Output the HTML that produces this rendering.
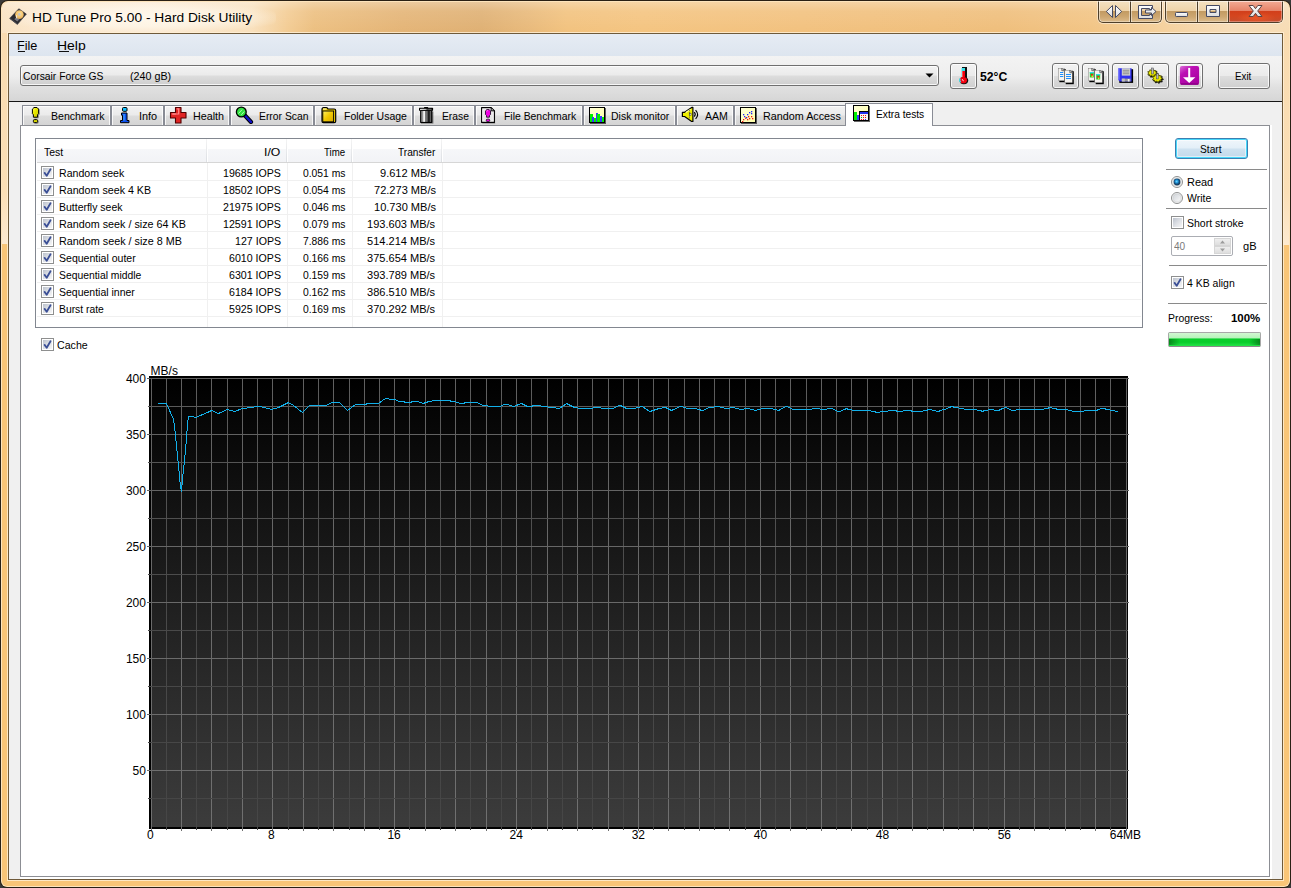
<!DOCTYPE html>
<html>
<head>
<meta charset="utf-8">
<title>HD Tune Pro 5.00 - Hard Disk Utility</title>
<style>
*{box-sizing:border-box;margin:0;padding:0}
html,body{width:1291px;height:888px;overflow:hidden}
body{position:relative;background:#3a3a3a;font-family:"Liberation Sans",sans-serif;font-size:11px;color:#000}
.a{position:absolute}
.t{position:absolute;white-space:pre;line-height:1;transform-origin:0 0}
#frame{left:0;top:0;width:1291px;height:888px;border-radius:8px 8px 7px 7px;background:#2a2014}
#frame2{left:1px;top:1px;width:1289px;height:886px;border-radius:7px 7px 6px 6px;background:#fde4bc}
#frame3{left:2px;top:2px;width:1287px;height:884px;border-radius:6px 6px 5px 5px;background:#f9c577}
#ftitle{left:2px;top:2px;width:1287px;height:31px;border-radius:6px 6px 0 0;
 background:linear-gradient(90deg,#f9e2c2 0px,#fbe6ca 30px,#fbe8cf 150px,#f9e0bc 250px,#f3cc94 285px,#ecbf80 312px,#e4b476 400px,#dfb073 480px,#e8b97a 525px,#f2c27e 565px,#f4c480 640px,#f2c17e 800px,#efbe7b 1000px,#f2c484 1090px,#f5d09c 1160px,#f6dcb8 1230px,#f7dcb4 1289px)}
#fleft{left:2px;top:33px;width:6px;height:211px;background:linear-gradient(180deg,#f9dbb0 0,#fbdfb6 75%,#fdead0 100%)}
#fright{left:1283px;top:33px;width:6px;height:212px;background:linear-gradient(180deg,#f9dbb0 0,#fbdfb6 75%,#fdead0 100%)}
#client{left:8px;top:33px;width:1275px;height:847px;background:#f0f0f0;border:1px solid #6f5a3a;box-shadow:0 0 0 1px rgba(255,240,215,.8)}
#menubar{left:9px;top:34px;width:1273px;height:22px;background:linear-gradient(180deg,#e6ecf4,#dde5ef)}
#toolbar{left:9px;top:56px;width:1273px;height:45px;background:linear-gradient(180deg,#f3f3f3 0,#eeeeee 45%,#e0e0e0 70%,#d6d6d6 100%)}
#tbline{left:9px;top:101px;width:1273px;height:1px;background:#161616}
#page{left:20px;top:125px;width:1250px;height:752px;background:#fff;border:1px solid #8c8e94;box-shadow:1px 1px 0 1px #fff}
.btn{border:1px solid #707070;border-radius:3px;background:linear-gradient(180deg,#f2f2f2 0,#ebebeb 48%,#dddddd 52%,#cfcfcf 100%);box-shadow:inset 0 0 0 1px rgba(255,255,255,.8)}
.tab{border:1px solid #898c95;border-bottom:none;background:linear-gradient(180deg,#f2f2f2 0,#ebebeb 48%,#dddddd 52%,#d4d4d4 100%);box-shadow:inset 1px 1px 0 rgba(255,255,255,.8),inset -1px 0 0 rgba(255,255,255,.8)}
.tabsel{border:1px solid #898c95;border-bottom:none;background:#fff}
.sep{height:1px;background:#8a8a8a}
.cb{width:13px;height:13px;border:1px solid #8e8f8f;background:linear-gradient(135deg,#dfe2e6 0,#f4f5f6 60%,#fbfbfb 100%);box-shadow:inset 0 0 0 1px #f4f4f4,inset 0 0 0 2px #c4c8cc}
</style>
</head>
<body>
<div id="frame" class="a"></div><div id="frame2" class="a"></div><div id="frame3" class="a"></div><div id="ftitle" class="a"></div><div id="fleft" class="a"></div><div id="fright" class="a"></div>
<div class="a" style="left:2px;top:2px;width:1287px;height:31px;border-radius:6px 6px 0 0;background:linear-gradient(180deg,rgba(255,255,255,.30) 0,rgba(255,255,255,.10) 30%,rgba(255,255,255,0) 100%)"></div><div class="a" style="left:14px;top:3px;width:262px;height:29px;border-radius:14px;background:radial-gradient(ellipse at center,rgba(255,250,240,.85) 0,rgba(255,250,240,.6) 45%,rgba(255,250,240,0) 78%)"></div>
<div id="client" class="a"></div><div id="menubar" class="a"></div><div id="toolbar" class="a"></div><div id="tbline" class="a"></div>
<svg class="a" style="left:6px;top:5px" width="24" height="24" viewBox="6 5 24 24"><defs><radialGradient id="pl" cx=".55" cy=".4" r=".7"><stop offset="0" stop-color="#ffe49a"/><stop offset=".6" stop-color="#f3c06a"/><stop offset="1" stop-color="#c89548"/></radialGradient></defs><polygon points="18.800,8.700 26.400,14.100 17.400,24.400 9.600,18.400" fill="#2a2a30" stroke="#3a3a40" stroke-width=".6" stroke-linejoin="round"/><polygon points="14.300,19.300 17.300,21.600 19.600,19 16.600,16.900" fill="#7a7a84"/><polygon points="10.600,18.300 17.300,23.300 17.400,24.400 9.600,18.400" fill="#4a4a52"/><circle cx="19.400" cy="14.600" r="4.300" fill="url(#pl)"/><circle cx="19.300" cy="14.400" r="1.300" fill="#c4c6cc"/><path d="M16.500 15.200L16.700 18.300" stroke="#f4f0e8" stroke-width=".9"/></svg>
<span class="t" style="left:31.77px;top:11px;font-size:13.4px;transform:scaleX(1.0270);">HD Tune Pro 5.00 - Hard Disk Utility</span>
<div class="a" style="left:1097px;top:1px;width:66px;height:23px;border-radius:0 0 6px 6px;border:1px solid rgba(255,255,255,.45);border-top:none"></div><div class="a" style="left:1164px;top:1px;width:120px;height:23px;border-radius:0 0 6px 6px;border:1px solid rgba(255,255,255,.45);border-top:none"></div><div class="a" style="left:1098px;top:1px;width:64px;height:22px;border:1px solid #4e3f2a;border-top:none;border-radius:0 0 5px 5px;background:linear-gradient(180deg,#f4e2c2 0,#eed3a8 47%,#c39b63 50%,#cda771 75%,#dcbb8c 100%);box-shadow:inset 1px 0 0 rgba(255,255,255,.5),inset -1px 0 0 rgba(255,255,255,.5),inset 0 -1px 0 rgba(255,255,255,.3)"></div><div class="a" style="left:1130px;top:1px;width:1px;height:21px;background:#4e3f2a"></div><div class="a" style="left:1131px;top:1px;width:1px;height:21px;background:rgba(255,255,255,.45)"></div><div class="a" style="left:1129px;top:1px;width:1px;height:21px;background:rgba(255,255,255,.45)"></div><div class="a" style="left:1165px;top:1px;width:118px;height:22px;border:1px solid #4e3f2a;border-top:none;border-radius:0 0 5px 5px;background:linear-gradient(180deg,#f4e2c2 0,#eed3a8 47%,#c39b63 50%,#cda771 75%,#dcbb8c 100%);box-shadow:inset 1px 0 0 rgba(255,255,255,.5),inset 0 -1px 0 rgba(255,255,255,.3)"></div><div class="a" style="left:1229px;top:1px;width:53px;height:21px;border-radius:0 0 4px 0;background:linear-gradient(180deg,#f3ab94 0,#e58268 47%,#d23f1b 50%,#d4451f 70%,#c64e2e 100%);box-shadow:inset 1px 0 0 rgba(255,255,255,.35),inset -1px 0 0 rgba(255,255,255,.35),inset 0 -1px 0 rgba(255,255,255,.3)"></div><div class="a" style="left:1236px;top:12px;width:40px;height:10px;background:radial-gradient(ellipse at 50% 60%,rgba(240,90,40,.75) 0,rgba(240,90,40,0) 70%)"></div><div class="a" style="left:1197px;top:1px;width:1px;height:21px;background:#4e3f2a"></div><div class="a" style="left:1198px;top:1px;width:1px;height:21px;background:rgba(255,255,255,.45)"></div><div class="a" style="left:1196px;top:1px;width:1px;height:21px;background:rgba(255,255,255,.45)"></div><div class="a" style="left:1228px;top:1px;width:1px;height:21px;background:#4e3f2a"></div><div class="a" style="left:1227px;top:1px;width:1px;height:21px;background:rgba(255,255,255,.45)"></div><div class="a" style="left:1098px;top:1px;width:185px;height:1px;background:rgba(255,255,255,.55)"></div><svg class="a" style="left:1090px;top:0px" width="201" height="30" viewBox="1090 0 201 30"><defs><linearGradient id="cg" x1="0" y1="0" x2="0" y2="1"><stop offset="0" stop-color="#fff"/><stop offset="1" stop-color="#dcdcdc"/></linearGradient></defs><g fill="url(#cg)" stroke="#454a63" stroke-width="1" stroke-linejoin="round"><path d="M1112.5 5.5 L1112.5 17.5 L1106.3 11.5z"/><path d="M1115.5 5.5 L1115.5 17.5 L1121.7 11.5z"/><path d="M1138.5 5.500h14v4h-3v-1h-8v7h8v-1h3v4h-14z"/><path d="M1145.500 10h6v-2.600l4.500 4.100-4.500 4.100v-2.600h-6z"/><rect x="1175.500" y="12.500" width="12" height="4" rx=".8"/><path d="M1206.500 5.500h13v11h-13z M1210 9.500h6v3h-6z" fill-rule="evenodd"/></g><path d="M1249 5.500 L1253.200 5.500 L1255.500 8.700 L1257.800 5.500 L1262 5.500 L1257.700 11 L1262 16.500 L1257.800 16.500 L1255.500 13.300 L1253.200 16.500 L1249 16.500 L1253.300 11z" fill="url(#cg)" stroke="#5c4444" stroke-width="1" stroke-linejoin="round"/></svg>
<span class="t" style="left:16.86px;top:39px;font-size:13.4px;transform:scaleX(0.9448);">File</span>
<div class="a" style="left:17.5px;top:51px;width:7.5px;height:1.4px;background:#111"></div>
<span class="t" style="left:57.46px;top:39px;font-size:13.4px;transform:scaleX(1.0418);">Help</span>
<div class="a" style="left:58.5px;top:51px;width:10px;height:1.4px;background:#111"></div>
<div class="a btn" style="left:20px;top:65px;width:919px;height:21px;"></div>
<span class="t" style="left:23.08px;top:71px;font-size:11px;transform:scaleX(0.9394);">Corsair Force GS</span>
<span class="t" style="left:130.34px;top:71px;font-size:11px;transform:scaleX(0.9750);">(240 gB)</span>
<svg class="a" style="left:925px;top:73px" width="9" height="5"><path d="M0.5 0.5h8l-4 4z" fill="#000"/></svg>
<div class="a btn" style="left:950px;top:63px;width:27px;height:26px;"></div>
<svg class="a" style="left:956px;top:64px" width="16" height="24" viewBox="956 64 16 24" ><g shape-rendering="crispEdges"><rect x="962" y="67" width="5" height="13" fill="#101010"/><rect x="961" y="68" width="1" height="10" fill="#a0e8f0"/><rect x="962" y="68" width="3" height="3" fill="#38e0e8"/><rect x="962" y="71" width="3" height="9" fill="#f40010"/><rect x="962" y="71" width="1" height="7" fill="#ff5050"/></g><ellipse cx="963.900" cy="80.600" rx="4.300" ry="3.600" fill="#101010"/><ellipse cx="963.300" cy="80.200" rx="3.700" ry="3.100" fill="#f40010"/><path d="M960.300 78.300a3.600 3.200 0 0 0 .5 4" stroke="#40e0e8" stroke-width="1.300" fill="none"/><path d="M962.300 79.200a1.600 1.600 0 0 0 1.400 1.600" stroke="#fff" stroke-width=".9" fill="none"/></svg>
<span class="t" style="left:980.13px;top:71px;font-size:12px;font-weight:700;transform:scaleX(1.0182);">52°C</span>
<div class="a btn" style="left:1052px;top:63px;width:27px;height:26px;"></div>
<div class="a btn" style="left:1082px;top:63px;width:27px;height:26px;"></div>
<div class="a btn" style="left:1112px;top:63px;width:27px;height:26px;"></div>
<div class="a btn" style="left:1142px;top:63px;width:27px;height:26px;"></div>
<div class="a btn" style="left:1176px;top:63px;width:27px;height:26px;"></div>
<svg class="a" style="left:1055px;top:65px" width="22" height="22" viewBox="1055 65 22 22" ><rect x="1059.3" y="69.2" width="6.5" height="13.0" fill="#000"/><path d="M1058.3 68.2h4l2 2v10.5h-6z" fill="#f6f4f0"/><path d="M1061.8 68.2v2.500h2.500z" fill="#fff" stroke="#222" stroke-width=".6"/><rect x="1058.3" y="68.2" width="6" height="12.5" fill="none" stroke="#666" stroke-width=".4"/><rect x="1060" y="72" width="3.300" height="1" fill="#1e90ff"/><rect x="1060" y="74" width="3.300" height="1" fill="#1e90ff"/><rect x="1060" y="76" width="3.300" height="1" fill="#1e90ff"/><rect x="1065.7" y="71.2" width="8.1" height="13.0" fill="#000"/><path d="M1064.7 70.2h5.6l2 2v10.5h-7.6z" fill="#f6f4f0"/><path d="M1069.8 70.2v2.500h2.500z" fill="#fff" stroke="#222" stroke-width=".6"/><rect x="1064.7" y="70.2" width="7.6" height="12.5" fill="none" stroke="#666" stroke-width=".4"/><rect x="1066" y="74" width="5" height="1" fill="#1e90ff"/><rect x="1066" y="76" width="5" height="1" fill="#1e90ff"/><rect x="1066" y="78" width="5" height="1" fill="#1e90ff"/></svg>
<svg class="a" style="left:1085px;top:65px" width="22" height="22" viewBox="1085 65 22 22" ><rect x="1089.3" y="69.2" width="6.5" height="13.0" fill="#000"/><path d="M1088.3 68.2h4l2 2v10.5h-6z" fill="#f6f4f0"/><path d="M1091.8 68.2v2.500h2.500z" fill="#fff" stroke="#222" stroke-width=".6"/><rect x="1088.3" y="68.2" width="6" height="12.5" fill="none" stroke="#666" stroke-width=".4"/><rect x="1089.8" y="72" width="4" height="5.500" fill="#30c830"/><rect x="1089.8" y="72" width="4" height="1.200" fill="#30d8f0"/><rect x="1091.0" y="74" width="1.800" height="1.800" fill="#f01818"/><rect x="1091.6" y="75.5" width="1.400" height="1.600" fill="#f0e020"/><rect x="1095.7" y="71.2" width="8.1" height="13.0" fill="#000"/><path d="M1094.7 70.2h5.6l2 2v10.5h-7.6z" fill="#f6f4f0"/><path d="M1099.8 70.2v2.500h2.500z" fill="#fff" stroke="#222" stroke-width=".6"/><rect x="1094.7" y="70.2" width="7.6" height="12.5" fill="none" stroke="#666" stroke-width=".4"/><rect x="1096.2" y="74" width="4" height="5.500" fill="#30c830"/><rect x="1096.2" y="74" width="4" height="1.200" fill="#30d8f0"/><rect x="1097.4" y="76" width="1.800" height="1.800" fill="#f01818"/><rect x="1098.0" y="77.5" width="1.400" height="1.600" fill="#f0e020"/></svg>
<svg class="a" style="left:1115px;top:65px" width="22" height="22" viewBox="1115 65 22 22" ><rect x="1119.300" y="69.200" width="13.800" height="13.700" fill="#000"/><path d="M1118.300 68.200h13.300v13.300h-11.800l-1.500-1.500z" fill="#3030f0"/><rect x="1118.300" y="68.200" width="1.200" height="11.500" fill="#8080ff"/><rect x="1121.800" y="68.200" width="8.400" height="7.400" fill="#d0d0d0"/><rect x="1122.800" y="69.800" width="6.400" height=".8" fill="#808080"/><rect x="1122.800" y="71.600" width="6.400" height=".8" fill="#808080"/><rect x="1122.800" y="73.400" width="6.400" height=".8" fill="#808080"/><rect x="1121.800" y="78.600" width="8.700" height="2.900" fill="#989898"/><rect x="1121.800" y="78.600" width="3" height="2.900" fill="#c0c0c0"/><rect x="1127.800" y="79" width="1.700" height="2.500" fill="#f4f4f4"/></svg>
<svg class="a" style="left:1144px;top:65px" width="24" height="22" viewBox="1144 65 24 22" ><polygon points="1158.20,74.00 1156.58,74.94 1157.03,76.44 1155.00,76.37 1154.07,77.74 1152.57,76.69 1150.70,77.29 1150.44,75.76 1148.50,75.30 1149.60,74.00 1148.50,72.70 1150.44,72.24 1150.70,70.71 1152.57,71.31 1154.07,70.26 1155.00,71.63 1157.03,71.56 1156.58,73.06" fill="#111" stroke="#111" stroke-width=".8" stroke-linejoin="round"/><polygon points="1163.50,79.30 1161.79,80.33 1162.26,82.00 1160.11,81.92 1159.12,83.44 1157.54,82.28 1155.55,82.94 1155.28,81.24 1153.22,80.74 1154.38,79.30 1153.22,77.86 1155.28,77.36 1155.55,75.66 1157.54,76.32 1159.12,75.16 1160.11,76.68 1162.26,76.60 1161.79,78.27" fill="#111" stroke="#111" stroke-width=".8" stroke-linejoin="round"/><polygon points="1157.20,73.00 1155.62,73.91 1156.05,75.38 1154.06,75.31 1153.15,76.64 1151.69,75.62 1149.85,76.20 1149.60,74.71 1147.70,74.27 1148.77,73.00 1147.70,71.73 1149.60,71.29 1149.85,69.80 1151.69,70.38 1153.15,69.36 1154.06,70.69 1156.05,70.62 1155.62,72.09" fill="#e8e800" stroke="#4a4a00" stroke-width=".8" stroke-linejoin="round"/><polygon points="1162.50,78.30 1160.82,79.31 1161.28,80.94 1159.17,80.86 1158.20,82.34 1156.65,81.21 1154.70,81.85 1154.43,80.20 1152.41,79.70 1153.56,78.30 1152.41,76.90 1154.43,76.40 1154.70,74.75 1156.65,75.39 1158.20,74.26 1159.17,75.74 1161.28,75.66 1160.82,77.29" fill="#e8e800" stroke="#4a4a00" stroke-width=".8" stroke-linejoin="round"/><rect x="1151.600" y="68" width="1.800" height="6" fill="#b8b8c0" stroke="#444" stroke-width=".5"/><rect x="1156.400" y="73.700" width="1.800" height="5.200" fill="#b8b8c0" stroke="#444" stroke-width=".5"/></svg>
<svg class="a" style="left:1178px;top:64px" width="24" height="24" viewBox="1178 64 24 24" ><defs><linearGradient id="pg" x1="0" y1="0" x2=".7" y2="1"><stop offset="0" stop-color="#dc70d8"/><stop offset=".35" stop-color="#bc10b4"/><stop offset="1" stop-color="#a800a0"/></linearGradient></defs><rect x="1179.900" y="65.900" width="19.200" height="18.900" rx="2" fill="url(#pg)"/><rect x="1180.500" y="83.300" width="18" height="1.500" rx=".7" fill="#8c0086"/><rect x="1188.200" y="67.900" width="2" height="12" fill="#fff"/><path d="M1183 77.200h12.400l-6.200 5.900z" fill="#fff"/></svg>
<div class="a btn" style="left:1218px;top:63px;width:52px;height:26px;"></div>
<span class="t" style="left:1234.60px;top:71px;font-size:11px;transform:scaleX(0.8872);">Exit</span>
<div class="a tab" style="left:22px;top:105px;width:89px;height:20px;"></div>
<span class="t" style="left:50.63px;top:111px;font-size:11px;transform:scaleX(0.9606);">Benchmark</span>
<div class="a tab" style="left:111px;top:105px;width:53px;height:20px;"></div>
<span class="t" style="left:139.40px;top:111px;font-size:11px;transform:scaleX(0.9890);">Info</span>
<div class="a tab" style="left:164px;top:105px;width:66px;height:20px;"></div>
<span class="t" style="left:192.52px;top:111px;font-size:11px;transform:scaleX(0.9773);">Health</span>
<div class="a tab" style="left:230px;top:105px;width:84px;height:20px;"></div>
<span class="t" style="left:259.35px;top:111px;font-size:11px;transform:scaleX(0.9419);">Error Scan</span>
<div class="a tab" style="left:314px;top:105px;width:99px;height:20px;"></div>
<span class="t" style="left:343.54px;top:111px;font-size:11px;transform:scaleX(0.9529);">Folder Usage</span>
<div class="a tab" style="left:413px;top:105px;width:62px;height:20px;"></div>
<span class="t" style="left:441.76px;top:111px;font-size:11px;transform:scaleX(0.9362);">Erase</span>
<div class="a tab" style="left:475px;top:105px;width:108px;height:20px;"></div>
<span class="t" style="left:503.65px;top:111px;font-size:11px;transform:scaleX(0.9452);">File Benchmark</span>
<div class="a tab" style="left:583px;top:105px;width:93px;height:20px;"></div>
<span class="t" style="left:611.34px;top:111px;font-size:11px;transform:scaleX(0.9526);">Disk monitor</span>
<div class="a tab" style="left:676px;top:105px;width:58px;height:20px;"></div>
<span class="t" style="left:705.28px;top:111px;font-size:11px;transform:scaleX(0.9602);">AAM</span>
<div class="a tab" style="left:734px;top:105px;width:113px;height:20px;"></div>
<span class="t" style="left:762.72px;top:111px;font-size:11px;transform:scaleX(0.9797);">Random Access</span>
<div id="page" class="a"></div>
<div class="a tabsel" style="left:845px;top:103px;width:88px;height:23px;"></div>
<span class="t" style="left:876.06px;top:109px;font-size:11px;transform:scaleX(0.9276);">Extra tests</span>
<svg class="a" style="left:28px;top:104px" width="16" height="22" viewBox="28 104 16 22" ><defs><linearGradient id="ex" x1="0" y1="0" x2="1" y2="1"><stop offset="0" stop-color="#ffff70"/><stop offset=".4" stop-color="#eaea00"/><stop offset="1" stop-color="#c4c400"/></linearGradient></defs><g transform="translate(.8,.8)" opacity=".3"><path d="M34 107.500h3l1.600 1.600v4.600l-1 1v2.500h-4.200v-2.500l-1-1v-4.600z" stroke="#000" stroke-width=".8"/><rect x="33.400" y="119.600" width="4.200" height="3" rx="1" stroke="#000" stroke-width=".8"/></g><path d="M34 107.500h3l1.600 1.600v4.600l-1 1v2.500h-4.200v-2.500l-1-1v-4.600z" fill="url(#ex)" stroke="#000" stroke-width="1" stroke-linejoin="round"/><rect x="33.400" y="119.600" width="4.200" height="3" rx="1" fill="#d8d800" stroke="#000" stroke-width="1"/></svg><svg class="a" style="left:119px;top:106px" width="12" height="18" viewBox="0 0 12 18" ><rect x="3.500" y="1.500" width="4.500" height="3.800" rx="1" fill="#10c0ff" stroke="#000" stroke-width="1"/><path d="M2.500 7h5.500v7.500h2v2.200h-8.500v-2.200h2v-5.300h-1.000z" fill="#0a50f0" stroke="#000" stroke-width="1" stroke-linejoin="round"/><path d="M5 8v6.500" stroke="#40a0ff" stroke-width="1.200"/></svg><svg class="a" style="left:169px;top:106px" width="18" height="18" viewBox="0 0 18 18" ><path d="M6.500 1.500h5.500v5h5v5.500h-5v5h-5.500v-5h-5v-5.500h5z" fill="#e02424" stroke="#500000" stroke-width="1.100" stroke-linejoin="round"/><path d="M7.700 2.800h2v5.200h-5.800" stroke="#ff8a8a" stroke-width="1.200" fill="none"/><path d="M2.800 8h4" stroke="#ff8a8a" stroke-width="1.200"/></svg><svg class="a" style="left:234px;top:105px" width="20" height="19" viewBox="0 0 20 19" ><path d="M11 10.500L17 17" stroke="#000" stroke-width="4.200" stroke-linecap="round"/><path d="M11 10.500L17 17" stroke="#1010c8" stroke-width="2.400" stroke-linecap="round"/><circle cx="7.300" cy="7" r="4.900" fill="#30e040" stroke="#000" stroke-width="1.300"/><path d="M4.500 8.500L8 4.700M7.300 9.800L10.200 6.500" stroke="#b0ffb0" stroke-width="1"/></svg><svg class="a" style="left:320px;top:106px" width="18" height="18" viewBox="0 0 18 18" ><defs><linearGradient id="fg" x1="0" y1="0" x2="1" y2="1"><stop offset="0" stop-color="#fff060"/><stop offset=".5" stop-color="#f0c800"/><stop offset="1" stop-color="#d8a800"/></linearGradient></defs><path d="M2 3.500c0-1 .6-1.800 1.600-1.800h2.800c.8 0 1.300.5 1.600 1.300h6.200c.9 0 1.500.6 1.500 1.500v10.700c0 .9-.6 1.500-1.500 1.500h-10.700c-.9 0-1.500-.6-1.500-1.500z" fill="#e8c800" stroke="#000" stroke-width="1.200"/><rect x="2.800" y="5" width="10.800" height="10.800" fill="url(#fg)" stroke="#000" stroke-width=".9"/><path d="M3 3h3.500" stroke="#fff8a0" stroke-width="1.200"/></svg><svg class="a" style="left:416px;top:105px" width="20" height="20" viewBox="416 105 20 20" ><defs><linearGradient id="tg" x1="0" y1="0" x2="1" y2="0"><stop offset="0" stop-color="#8a8a8a"/><stop offset=".2" stop-color="#9c9c9c"/><stop offset=".24" stop-color="#f2f2f2"/><stop offset=".36" stop-color="#f2f2f2"/><stop offset=".41" stop-color="#7c7c7c"/><stop offset=".6" stop-color="#6a6a6a"/><stop offset=".72" stop-color="#1c1c1c"/><stop offset=".85" stop-color="#2a2a2a"/><stop offset=".89" stop-color="#686868"/><stop offset="1" stop-color="#555"/></linearGradient><linearGradient id="tl" x1="0" y1="0" x2="1" y2="0"><stop offset="0" stop-color="#e4e4e4"/><stop offset=".45" stop-color="#b8b8b8"/><stop offset=".6" stop-color="#444"/><stop offset=".85" stop-color="#666"/><stop offset="1" stop-color="#222"/></linearGradient></defs><rect x="421" y="111.500" width="12.400" height="12.100" fill="#000" opacity=".45"/><rect x="420.100" y="110.300" width="12.200" height="12.600" rx=".6" fill="#000"/><rect x="421.200" y="110.800" width="10" height="11.100" fill="url(#tg)"/><rect x="424" y="106.900" width="4.100" height="2" rx=".5" fill="#000"/><rect x="419" y="107.800" width="14.100" height="3" rx=".6" fill="#000"/><rect x="420" y="108.700" width="12.100" height="1.400" rx=".6" fill="url(#tl)"/></svg><svg class="a" style="left:478px;top:104px" width="22" height="22" viewBox="478 104 22 22" ><path d="M482.300 108.300h9.600l3.200 3.200v12h-12.800z" fill="#000" opacity=".4"/><path d="M481.600 107.600h9.600l3.200 3.200v11.600h-12.800z" fill="#fff" stroke="#000" stroke-width="1.100" stroke-linejoin="round"/><rect x="483.200" y="109.400" width="9.600" height="11.400" fill="#e6e6e6"/><path d="M491.200 107.600v3.200h3.200z" fill="#fff" stroke="#000" stroke-width="1" stroke-linejoin="round"/><path d="M486.800 109.600h2.400l1.300 1.300v3.600l-1 1v1.700h-3v-1.700l-1-1v-3.600z" fill="#f000e4" stroke="#281030" stroke-width=".9" stroke-linejoin="round"/><path d="M486.700 111.300l1.200-.9" stroke="#ff9cf8" stroke-width=".9"/><rect x="486.300" y="119.200" width="3.400" height="2.300" rx=".9" fill="#f000e4" stroke="#281030" stroke-width=".9"/></svg><svg class="a" style="left:589px;top:107px" width="18" height="18" viewBox="0 0 18 18" ><defs><linearGradient id="yg" x1="0" y1="0" x2="1" y2="1"><stop offset="0" stop-color="#ffffd8"/><stop offset="1" stop-color="#ffffa8"/></linearGradient></defs><g shape-rendering="crispEdges"><rect x="1" y="1" width="16" height="16" fill="#000" opacity=".6"/><rect x="0" y="0" width="16" height="16" fill="#000"/><rect x="1" y="1" width="14" height="14" fill="url(#yg)"/><rect x="1" y="7" width="3" height="8" fill="#00f000"/><rect x="3" y="10" width="2" height="5" fill="#3838ff"/><rect x="5" y="11" width="2" height="4" fill="#00f000"/><rect x="7" y="6" width="1.5" height="9" fill="#3838ff"/><rect x="8" y="7" width="3" height="8" fill="#00f000"/><rect x="11" y="9" width="2" height="6" fill="#3838ff"/><rect x="13" y="10" width="2" height="5" fill="#00f000"/></g></svg><svg class="a" style="left:679px;top:104px" width="22" height="22" viewBox="679 104 22 22" ><path d="M682.400 112.300h2.200L691.700 107.400h1.200V121.500h-1.200L684.600 116.500h-2.200z" fill="#f0f000" stroke="#000" stroke-width="1.200" stroke-linejoin="round"/><path d="M685.800 112.600L690.600 109.300" stroke="#ffffa0" stroke-width="1.200"/><path d="M689.400 109.500V119.500" stroke="#444" stroke-width=".7" stroke-dasharray="1.500 .8"/><rect x="689.600" y="113.200" width="1.400" height="2.400" fill="#fff" stroke="#222" stroke-width=".5"/><path d="M694.300 112.200q1.900 2.200 0 4.400M695.600 110.100q3.900 4.400 0 8.800" fill="none" stroke="#000" stroke-width="1.150"/></svg><svg class="a" style="left:740px;top:107px" width="18" height="18" viewBox="0 0 18 18" ><g shape-rendering="crispEdges"><rect x="1" y="1" width="16" height="16" fill="#000" opacity=".6"/><rect x="0" y="0" width="16" height="16" fill="#000"/><rect x="1" y="1" width="14" height="14" fill="url(#yg)"/></g><rect x="3" y="7" width="1.300" height="1.300" fill="#2020ff"/><rect x="4" y="9" width="1.300" height="1.300" fill="#2020ff"/><rect x="6" y="10" width="1.300" height="1.300" fill="#2020ff"/><rect x="7" y="7" width="1.300" height="1.300" fill="#2020ff"/><rect x="9" y="5" width="1.300" height="1.300" fill="#2020ff"/><rect x="11" y="4" width="1.300" height="1.300" fill="#2020ff"/><rect x="11" y="6" width="1.300" height="1.300" fill="#2020ff"/><rect x="3" y="12" width="1.300" height="1.300" fill="#f01010"/><rect x="2" y="14" width="1.300" height="1.300" fill="#f01010"/><rect x="5" y="10.5" width="1.300" height="1.300" fill="#f01010"/><rect x="7" y="12" width="1.300" height="1.300" fill="#f01010"/><rect x="8" y="9" width="1.300" height="1.300" fill="#f01010"/><rect x="9" y="11" width="1.300" height="1.300" fill="#f01010"/><rect x="11" y="9" width="1.300" height="1.300" fill="#f01010"/><rect x="12" y="11" width="1.300" height="1.300" fill="#f01010"/></svg><svg class="a" style="left:853px;top:105px" width="18" height="18" viewBox="0 0 18 18" ><g shape-rendering="crispEdges"><rect x="1" y="1" width="16" height="16" fill="#000" opacity=".6"/><rect x="0" y="0" width="16" height="16" fill="#000"/><rect x="1" y="1" width="14" height="14" fill="url(#yg)"/><rect x="1" y="7" width="2.500" height="8" fill="#00f000"/><rect x="3.500" y="10" width="2" height="5" fill="#3838ff"/><rect x="5.500" y="6" width="10.500" height="10" fill="#000"/><rect x="7" y="7" width="8" height="8" fill="#f4f4f4"/><rect x="7" y="7" width="8" height="2" fill="#2030f0"/><rect x="8" y="9.5" width="1" height="1" fill="#f01010"/><rect x="10" y="9.5" width="1" height="1" fill="#f01010"/><rect x="12" y="9.5" width="1" height="1" fill="#f01010"/><rect x="8" y="11.5" width="1" height="1" fill="#00c000"/><rect x="10" y="11.5" width="1" height="1" fill="#f01010"/><rect x="12" y="11.5" width="1" height="1" fill="#f01010"/><rect x="8" y="13.5" width="1" height="1" fill="#f01010"/><rect x="10" y="13.5" width="1" height="1" fill="#f01010"/><rect x="12" y="13.5" width="1" height="1" fill="#2020ff"/></g></svg>
<div class="a" style="left:35px;top:138px;width:1108px;height:190px;border:1px solid #828790;background:#fff"></div>
<div class="a" style="left:37px;top:139px;width:1104px;height:23px;background:linear-gradient(180deg,#fff 0,#fff 43.4%,#f6f7f9 43.5%,#f2f3f6 100%)"></div>
<div class="a" style="left:37px;top:162px;width:1104px;height:1px;background:#d6d6d6"></div>
<div class="a" style="left:206px;top:139px;width:1px;height:23px;background:linear-gradient(180deg,#f4f4f4,#dcdfe3)"></div>
<div class="a" style="left:207px;top:139px;width:1px;height:23px;background:#fff"></div>
<div class="a" style="left:207px;top:163px;width:1px;height:164px;background:#f0f0f0"></div>
<div class="a" style="left:286px;top:139px;width:1px;height:23px;background:linear-gradient(180deg,#f4f4f4,#dcdfe3)"></div>
<div class="a" style="left:287px;top:139px;width:1px;height:23px;background:#fff"></div>
<div class="a" style="left:287px;top:163px;width:1px;height:164px;background:#f0f0f0"></div>
<div class="a" style="left:351px;top:139px;width:1px;height:23px;background:linear-gradient(180deg,#f4f4f4,#dcdfe3)"></div>
<div class="a" style="left:352px;top:139px;width:1px;height:23px;background:#fff"></div>
<div class="a" style="left:352px;top:163px;width:1px;height:164px;background:#f0f0f0"></div>
<div class="a" style="left:441px;top:139px;width:1px;height:23px;background:linear-gradient(180deg,#f4f4f4,#dcdfe3)"></div>
<div class="a" style="left:442px;top:139px;width:1px;height:23px;background:#fff"></div>
<div class="a" style="left:442px;top:163px;width:1px;height:164px;background:#f0f0f0"></div>
<div class="a" style="left:37px;top:180px;width:1104px;height:1px;background:#f0f0f0"></div>
<div class="a" style="left:37px;top:197px;width:1104px;height:1px;background:#f0f0f0"></div>
<div class="a" style="left:37px;top:214px;width:1104px;height:1px;background:#f0f0f0"></div>
<div class="a" style="left:37px;top:231px;width:1104px;height:1px;background:#f0f0f0"></div>
<div class="a" style="left:37px;top:248px;width:1104px;height:1px;background:#f0f0f0"></div>
<div class="a" style="left:37px;top:265px;width:1104px;height:1px;background:#f0f0f0"></div>
<div class="a" style="left:37px;top:282px;width:1104px;height:1px;background:#f0f0f0"></div>
<div class="a" style="left:37px;top:299px;width:1104px;height:1px;background:#f0f0f0"></div>
<div class="a" style="left:37px;top:316px;width:1104px;height:1px;background:#f0f0f0"></div>
<span class="t" style="left:43.57px;top:147px;font-size:11px;transform:scaleX(0.9519);">Test</span>
<span class="t" style="left:264.48px;top:147px;font-size:11px;transform:scaleX(1.1116);">I/O</span>
<span class="t" style="left:323.99px;top:147px;font-size:11px;transform:scaleX(0.8795);">Time</span>
<span class="t" style="left:398.28px;top:147px;font-size:11px;transform:scaleX(0.9196);">Transfer</span>
<svg class="a" style="left:41px;top:166px" width="13" height="13" viewBox="0 0 13 13" ><defs><linearGradient id="ck" x1="0" y1="0" x2="1" y2="1"><stop offset="0" stop-color="#bcc2cd"/><stop offset=".5" stop-color="#dde0e5"/><stop offset="1" stop-color="#f6f6f7"/></linearGradient></defs><rect x=".5" y=".5" width="12" height="12" fill="#fff" stroke="#8e8f8f"/><rect x="2" y="2" width="9" height="9" fill="url(#ck)"/><path d="M3.600 6.900 L5.700 9.700 L9.500 3.200" fill="none" stroke="#3b4f96" stroke-width="1.800" stroke-linecap="round" stroke-linejoin="round"/></svg>
<span class="t" style="left:58.73px;top:168px;font-size:11px;transform:scaleX(0.9613);">Random seek</span>
<span class="t" style="left:222.79px;top:168px;font-size:11px;transform:scaleX(0.9659);">19685 IOPS</span>
<span class="t" style="left:302.60px;top:168px;font-size:11px;transform:scaleX(0.9388);">0.051 ms</span>
<span class="t" style="left:379.74px;top:168px;font-size:11px;transform:scaleX(1.0040);">9.612 MB/s</span>
<svg class="a" style="left:41px;top:183px" width="13" height="13" viewBox="0 0 13 13" ><defs><linearGradient id="ck" x1="0" y1="0" x2="1" y2="1"><stop offset="0" stop-color="#bcc2cd"/><stop offset=".5" stop-color="#dde0e5"/><stop offset="1" stop-color="#f6f6f7"/></linearGradient></defs><rect x=".5" y=".5" width="12" height="12" fill="#fff" stroke="#8e8f8f"/><rect x="2" y="2" width="9" height="9" fill="url(#ck)"/><path d="M3.600 6.900 L5.700 9.700 L9.500 3.200" fill="none" stroke="#3b4f96" stroke-width="1.800" stroke-linecap="round" stroke-linejoin="round"/></svg>
<span class="t" style="left:58.72px;top:185px;font-size:11px;transform:scaleX(0.9721);">Random seek 4 KB</span>
<span class="t" style="left:222.79px;top:185px;font-size:11px;transform:scaleX(0.9659);">18502 IOPS</span>
<span class="t" style="left:302.60px;top:185px;font-size:11px;transform:scaleX(0.9388);">0.054 ms</span>
<span class="t" style="left:373.60px;top:185px;font-size:11px;transform:scaleX(1.0040);">72.273 MB/s</span>
<svg class="a" style="left:41px;top:200px" width="13" height="13" viewBox="0 0 13 13" ><defs><linearGradient id="ck" x1="0" y1="0" x2="1" y2="1"><stop offset="0" stop-color="#bcc2cd"/><stop offset=".5" stop-color="#dde0e5"/><stop offset="1" stop-color="#f6f6f7"/></linearGradient></defs><rect x=".5" y=".5" width="12" height="12" fill="#fff" stroke="#8e8f8f"/><rect x="2" y="2" width="9" height="9" fill="url(#ck)"/><path d="M3.600 6.900 L5.700 9.700 L9.500 3.200" fill="none" stroke="#3b4f96" stroke-width="1.800" stroke-linecap="round" stroke-linejoin="round"/></svg>
<span class="t" style="left:58.74px;top:202px;font-size:11px;transform:scaleX(0.9520);">Butterfly seek</span>
<span class="t" style="left:222.79px;top:202px;font-size:11px;transform:scaleX(0.9659);">21975 IOPS</span>
<span class="t" style="left:302.60px;top:202px;font-size:11px;transform:scaleX(0.9388);">0.046 ms</span>
<span class="t" style="left:373.60px;top:202px;font-size:11px;transform:scaleX(1.0040);">10.730 MB/s</span>
<svg class="a" style="left:41px;top:217px" width="13" height="13" viewBox="0 0 13 13" ><defs><linearGradient id="ck" x1="0" y1="0" x2="1" y2="1"><stop offset="0" stop-color="#bcc2cd"/><stop offset=".5" stop-color="#dde0e5"/><stop offset="1" stop-color="#f6f6f7"/></linearGradient></defs><rect x=".5" y=".5" width="12" height="12" fill="#fff" stroke="#8e8f8f"/><rect x="2" y="2" width="9" height="9" fill="url(#ck)"/><path d="M3.600 6.900 L5.700 9.700 L9.500 3.200" fill="none" stroke="#3b4f96" stroke-width="1.800" stroke-linecap="round" stroke-linejoin="round"/></svg>
<span class="t" style="left:58.72px;top:219px;font-size:11px;transform:scaleX(0.9785);">Random seek / size 64 KB</span>
<span class="t" style="left:222.79px;top:219px;font-size:11px;transform:scaleX(0.9659);">12591 IOPS</span>
<span class="t" style="left:302.60px;top:219px;font-size:11px;transform:scaleX(0.9388);">0.079 ms</span>
<span class="t" style="left:367.46px;top:219px;font-size:11px;transform:scaleX(1.0040);">193.603 MB/s</span>
<svg class="a" style="left:41px;top:234px" width="13" height="13" viewBox="0 0 13 13" ><defs><linearGradient id="ck" x1="0" y1="0" x2="1" y2="1"><stop offset="0" stop-color="#bcc2cd"/><stop offset=".5" stop-color="#dde0e5"/><stop offset="1" stop-color="#f6f6f7"/></linearGradient></defs><rect x=".5" y=".5" width="12" height="12" fill="#fff" stroke="#8e8f8f"/><rect x="2" y="2" width="9" height="9" fill="url(#ck)"/><path d="M3.600 6.900 L5.700 9.700 L9.500 3.200" fill="none" stroke="#3b4f96" stroke-width="1.800" stroke-linecap="round" stroke-linejoin="round"/></svg>
<span class="t" style="left:58.72px;top:236px;font-size:11px;transform:scaleX(0.9801);">Random seek / size 8 MB</span>
<span class="t" style="left:234.61px;top:236px;font-size:11px;transform:scaleX(0.9659);">127 IOPS</span>
<span class="t" style="left:302.60px;top:236px;font-size:11px;transform:scaleX(0.9388);">7.886 ms</span>
<span class="t" style="left:367.46px;top:236px;font-size:11px;transform:scaleX(1.0040);">514.214 MB/s</span>
<svg class="a" style="left:41px;top:251px" width="13" height="13" viewBox="0 0 13 13" ><defs><linearGradient id="ck" x1="0" y1="0" x2="1" y2="1"><stop offset="0" stop-color="#bcc2cd"/><stop offset=".5" stop-color="#dde0e5"/><stop offset="1" stop-color="#f6f6f7"/></linearGradient></defs><rect x=".5" y=".5" width="12" height="12" fill="#fff" stroke="#8e8f8f"/><rect x="2" y="2" width="9" height="9" fill="url(#ck)"/><path d="M3.600 6.900 L5.700 9.700 L9.500 3.200" fill="none" stroke="#3b4f96" stroke-width="1.800" stroke-linecap="round" stroke-linejoin="round"/></svg>
<span class="t" style="left:59.13px;top:253px;font-size:11px;transform:scaleX(0.9579);">Sequential outer</span>
<span class="t" style="left:228.70px;top:253px;font-size:11px;transform:scaleX(0.9659);">6010 IOPS</span>
<span class="t" style="left:302.60px;top:253px;font-size:11px;transform:scaleX(0.9388);">0.166 ms</span>
<span class="t" style="left:367.46px;top:253px;font-size:11px;transform:scaleX(1.0040);">375.654 MB/s</span>
<svg class="a" style="left:41px;top:268px" width="13" height="13" viewBox="0 0 13 13" ><defs><linearGradient id="ck" x1="0" y1="0" x2="1" y2="1"><stop offset="0" stop-color="#bcc2cd"/><stop offset=".5" stop-color="#dde0e5"/><stop offset="1" stop-color="#f6f6f7"/></linearGradient></defs><rect x=".5" y=".5" width="12" height="12" fill="#fff" stroke="#8e8f8f"/><rect x="2" y="2" width="9" height="9" fill="url(#ck)"/><path d="M3.600 6.900 L5.700 9.700 L9.500 3.200" fill="none" stroke="#3b4f96" stroke-width="1.800" stroke-linecap="round" stroke-linejoin="round"/></svg>
<span class="t" style="left:59.13px;top:270px;font-size:11px;transform:scaleX(0.9414);">Sequential middle</span>
<span class="t" style="left:228.70px;top:270px;font-size:11px;transform:scaleX(0.9659);">6301 IOPS</span>
<span class="t" style="left:302.60px;top:270px;font-size:11px;transform:scaleX(0.9388);">0.159 ms</span>
<span class="t" style="left:367.46px;top:270px;font-size:11px;transform:scaleX(1.0040);">393.789 MB/s</span>
<svg class="a" style="left:41px;top:285px" width="13" height="13" viewBox="0 0 13 13" ><defs><linearGradient id="ck" x1="0" y1="0" x2="1" y2="1"><stop offset="0" stop-color="#bcc2cd"/><stop offset=".5" stop-color="#dde0e5"/><stop offset="1" stop-color="#f6f6f7"/></linearGradient></defs><rect x=".5" y=".5" width="12" height="12" fill="#fff" stroke="#8e8f8f"/><rect x="2" y="2" width="9" height="9" fill="url(#ck)"/><path d="M3.600 6.900 L5.700 9.700 L9.500 3.200" fill="none" stroke="#3b4f96" stroke-width="1.800" stroke-linecap="round" stroke-linejoin="round"/></svg>
<span class="t" style="left:59.13px;top:287px;font-size:11px;transform:scaleX(0.9539);">Sequential inner</span>
<span class="t" style="left:228.70px;top:287px;font-size:11px;transform:scaleX(0.9659);">6184 IOPS</span>
<span class="t" style="left:302.60px;top:287px;font-size:11px;transform:scaleX(0.9388);">0.162 ms</span>
<span class="t" style="left:367.46px;top:287px;font-size:11px;transform:scaleX(1.0040);">386.510 MB/s</span>
<svg class="a" style="left:41px;top:302px" width="13" height="13" viewBox="0 0 13 13" ><defs><linearGradient id="ck" x1="0" y1="0" x2="1" y2="1"><stop offset="0" stop-color="#bcc2cd"/><stop offset=".5" stop-color="#dde0e5"/><stop offset="1" stop-color="#f6f6f7"/></linearGradient></defs><rect x=".5" y=".5" width="12" height="12" fill="#fff" stroke="#8e8f8f"/><rect x="2" y="2" width="9" height="9" fill="url(#ck)"/><path d="M3.600 6.900 L5.700 9.700 L9.500 3.200" fill="none" stroke="#3b4f96" stroke-width="1.800" stroke-linecap="round" stroke-linejoin="round"/></svg>
<span class="t" style="left:58.75px;top:304px;font-size:11px;transform:scaleX(0.9395);">Burst rate</span>
<span class="t" style="left:228.70px;top:304px;font-size:11px;transform:scaleX(0.9659);">5925 IOPS</span>
<span class="t" style="left:302.60px;top:304px;font-size:11px;transform:scaleX(0.9388);">0.169 ms</span>
<span class="t" style="left:367.46px;top:304px;font-size:11px;transform:scaleX(1.0040);">370.292 MB/s</span>
<svg class="a" style="left:41px;top:338px" width="13" height="13" viewBox="0 0 13 13" ><defs><linearGradient id="ck" x1="0" y1="0" x2="1" y2="1"><stop offset="0" stop-color="#bcc2cd"/><stop offset=".5" stop-color="#dde0e5"/><stop offset="1" stop-color="#f6f6f7"/></linearGradient></defs><rect x=".5" y=".5" width="12" height="12" fill="#fff" stroke="#8e8f8f"/><rect x="2" y="2" width="9" height="9" fill="url(#ck)"/><path d="M3.600 6.900 L5.700 9.700 L9.500 3.200" fill="none" stroke="#3b4f96" stroke-width="1.800" stroke-linecap="round" stroke-linejoin="round"/></svg>
<span class="t" style="left:56.57px;top:340px;font-size:11px;transform:scaleX(0.9657);">Cache</span>
<div class="a" style="left:1175px;top:138px;width:73px;height:21px;border:1px solid #3c7fb1;border-radius:3px;background:linear-gradient(180deg,#f0f6fb 0,#e3eff8 48%,#cfe2f0 52%,#c3d9ea 100%);box-shadow:inset 0 0 0 1px #48d8fb,inset 0 0 0 2px rgba(255,255,255,.5)"></div>
<span class="t" style="left:1199.74px;top:144px;font-size:11px;transform:scaleX(0.9267);">Start</span>
<div class="a sep" style="left:1166px;top:169px;width:101px;height:1px;"></div>
<div class="a sep" style="left:1166px;top:208px;width:101px;height:1px;"></div>
<div class="a sep" style="left:1169px;top:265px;width:98px;height:1px;"></div>
<div class="a sep" style="left:1168px;top:303px;width:99px;height:1px;"></div>
<svg class="a" style="left:1171px;top:176px" width="12" height="12" viewBox="0 0 12 12" ><defs><radialGradient id="rg" cx=".45" cy=".42" r=".6"><stop offset="0" stop-color="#7ad6fb"/><stop offset=".3" stop-color="#25a0e4"/><stop offset=".62" stop-color="#17517f"/><stop offset="1" stop-color="#11304c"/></radialGradient></defs><circle cx="6" cy="6" r="5.500" fill="#fff" stroke="#8e8f8f"/><circle cx="6" cy="6" r="4.200" fill="#f2f2f2" stroke="#c4c6c8" stroke-width=".6"/><circle cx="6" cy="6" r="3.400" fill="url(#rg)"/></svg>
<span class="t" style="left:1186.60px;top:177px;font-size:11px;transform:scaleX(0.9966);">Read</span>
<svg class="a" style="left:1171px;top:192px" width="12" height="12" viewBox="0 0 12 12" ><defs><linearGradient id="ro" x1="0" y1="0" x2="1" y2="1"><stop offset="0" stop-color="#cfd3d8"/><stop offset="1" stop-color="#fafafa"/></linearGradient></defs><circle cx="6" cy="6" r="5.500" fill="#fff" stroke="#8e8f8f"/><circle cx="6" cy="6" r="4.200" fill="url(#ro)" stroke="#c4c6c8" stroke-width=".6"/></svg>
<span class="t" style="left:1187.26px;top:193px;font-size:11px;transform:scaleX(0.9544);">Write</span>
<svg class="a" style="left:1171px;top:216px" width="13" height="13" viewBox="0 0 13 13" ><defs><linearGradient id="ck" x1="0" y1="0" x2="1" y2="1"><stop offset="0" stop-color="#bcc2cd"/><stop offset=".5" stop-color="#dde0e5"/><stop offset="1" stop-color="#f6f6f7"/></linearGradient></defs><rect x=".5" y=".5" width="12" height="12" fill="#fff" stroke="#8e8f8f"/><rect x="2" y="2" width="9" height="9" fill="url(#ck)"/></svg>
<span class="t" style="left:1187.03px;top:218px;font-size:11px;transform:scaleX(0.9550);">Short stroke</span>
<div class="a" style="left:1171px;top:236px;width:62px;height:20px;border:1px solid #abadb3;border-radius:2px;background:#fff"></div>
<span class="t" style="left:1174.08px;top:241px;font-size:11px;color:#7a7a7a;transform:scaleX(0.9160);">40</span>
<div class="a" style="left:1214px;top:238px;width:17px;height:8px;background:linear-gradient(180deg,#efefef,#dedede);border:1px solid #d6d6d6"></div><div class="a" style="left:1214px;top:246px;width:17px;height:8px;background:linear-gradient(180deg,#efefef,#dedede);border:1px solid #d6d6d6"></div><svg class="a" style="left:1220px;top:240px" width="5" height="4" viewBox="0 0 5 4" ><path d="M0 3.500L2.500 0.500L5 3.500z" fill="#9c9c9c"/></svg><svg class="a" style="left:1220px;top:248px" width="5" height="4" viewBox="0 0 5 4" ><path d="M0 0.500L2.500 3.500L5 0.500z" fill="#9c9c9c"/></svg>
<span class="t" style="left:1243.23px;top:241px;font-size:11px;transform:scaleX(1.0065);">gB</span>
<svg class="a" style="left:1171px;top:276px" width="13" height="13" viewBox="0 0 13 13" ><defs><linearGradient id="ck" x1="0" y1="0" x2="1" y2="1"><stop offset="0" stop-color="#bcc2cd"/><stop offset=".5" stop-color="#dde0e5"/><stop offset="1" stop-color="#f6f6f7"/></linearGradient></defs><rect x=".5" y=".5" width="12" height="12" fill="#fff" stroke="#8e8f8f"/><rect x="2" y="2" width="9" height="9" fill="url(#ck)"/><path d="M3.600 6.900 L5.700 9.700 L9.500 3.200" fill="none" stroke="#3b4f96" stroke-width="1.800" stroke-linecap="round" stroke-linejoin="round"/></svg>
<span class="t" style="left:1187.07px;top:278px;font-size:11px;transform:scaleX(0.9514);">4 KB align</span>
<span class="t" style="left:1167.54px;top:313px;font-size:11px;transform:scaleX(0.9496);">Progress:</span>
<span class="t" style="left:1231.09px;top:313px;font-size:11px;font-weight:700;transform:scaleX(1.0420);">100%</span>
<div class="a" style="left:1168px;top:332px;width:93px;height:15px;border:1px solid #a8a8a8;border-bottom-color:#8a8a8a;border-radius:2px;background:#0c2"></div><div class="a" style="left:1169px;top:333px;width:91px;height:13px;background:linear-gradient(180deg,#d2f8d2 0,#b6f3ba 40%,#0ccf2e 44%,#08cc2a 70%,#25e548 100%)"></div><div class="a" style="left:1169px;top:339px;width:91px;height:6px;background:linear-gradient(90deg,rgba(0,70,10,.5) 0,rgba(0,70,10,0) 12%,rgba(0,70,10,0) 88%,rgba(0,70,10,.5) 100%)"></div>
<svg class="a" style="left:120px;top:360px" width="1030" height="490" viewBox="120 360 1030 490" shape-rendering="crispEdges">
<defs><linearGradient id="bg" x1="0" y1="0" x2="0" y2="1"><stop offset="0" stop-color="#000"/><stop offset="0.25" stop-color="#101010"/><stop offset="0.5" stop-color="#1f1f1f"/><stop offset="0.75" stop-color="#2e2e2e"/><stop offset="1" stop-color="#3c3c3c"/></linearGradient><linearGradient id="gM" gradientUnits="userSpaceOnUse" x1="0" y1="378" x2="0" y2="827"><stop offset="0" stop-color="#606060"/><stop offset="0.5" stop-color="#6a6a6a"/><stop offset="1" stop-color="#707070"/></linearGradient><linearGradient id="gm" gradientUnits="userSpaceOnUse" x1="0" y1="378" x2="0" y2="827"><stop offset="0" stop-color="#5e5e5e"/><stop offset="0.25" stop-color="#525252"/><stop offset="0.5" stop-color="#4a4a4a"/><stop offset="1" stop-color="#464646"/></linearGradient></defs>
<rect x="149" y="376" width="979" height="453" fill="#000"/>
<rect x="151" y="378" width="976" height="449" fill="url(#bg)"/>
<rect x="151" y="378" width="1" height="453" fill="url(#gM)"/>
<rect x="166" y="378" width="1" height="452" fill="url(#gm)"/>
<rect x="181" y="378" width="1" height="453" fill="url(#gM)"/>
<rect x="196" y="378" width="1" height="452" fill="url(#gm)"/>
<rect x="211" y="378" width="1" height="453" fill="url(#gM)"/>
<rect x="227" y="378" width="1" height="452" fill="url(#gm)"/>
<rect x="242" y="378" width="1" height="453" fill="url(#gM)"/>
<rect x="257" y="378" width="1" height="452" fill="url(#gm)"/>
<rect x="272" y="378" width="1" height="453" fill="url(#gM)"/>
<rect x="288" y="378" width="1" height="452" fill="url(#gm)"/>
<rect x="303" y="378" width="1" height="453" fill="url(#gM)"/>
<rect x="318" y="378" width="1" height="452" fill="url(#gm)"/>
<rect x="333" y="378" width="1" height="453" fill="url(#gM)"/>
<rect x="349" y="378" width="1" height="452" fill="url(#gm)"/>
<rect x="364" y="378" width="1" height="453" fill="url(#gM)"/>
<rect x="379" y="378" width="1" height="452" fill="url(#gm)"/>
<rect x="394" y="378" width="1" height="453" fill="url(#gM)"/>
<rect x="409" y="378" width="1" height="452" fill="url(#gm)"/>
<rect x="425" y="378" width="1" height="453" fill="url(#gM)"/>
<rect x="440" y="378" width="1" height="452" fill="url(#gm)"/>
<rect x="455" y="378" width="1" height="453" fill="url(#gM)"/>
<rect x="470" y="378" width="1" height="452" fill="url(#gm)"/>
<rect x="486" y="378" width="1" height="453" fill="url(#gM)"/>
<rect x="501" y="378" width="1" height="452" fill="url(#gm)"/>
<rect x="516" y="378" width="1" height="453" fill="url(#gM)"/>
<rect x="531" y="378" width="1" height="452" fill="url(#gm)"/>
<rect x="547" y="378" width="1" height="453" fill="url(#gM)"/>
<rect x="562" y="378" width="1" height="452" fill="url(#gm)"/>
<rect x="577" y="378" width="1" height="453" fill="url(#gM)"/>
<rect x="592" y="378" width="1" height="452" fill="url(#gm)"/>
<rect x="608" y="378" width="1" height="453" fill="url(#gM)"/>
<rect x="623" y="378" width="1" height="452" fill="url(#gm)"/>
<rect x="638" y="378" width="1" height="453" fill="url(#gM)"/>
<rect x="653" y="378" width="1" height="452" fill="url(#gm)"/>
<rect x="668" y="378" width="1" height="453" fill="url(#gM)"/>
<rect x="684" y="378" width="1" height="452" fill="url(#gm)"/>
<rect x="699" y="378" width="1" height="453" fill="url(#gM)"/>
<rect x="714" y="378" width="1" height="452" fill="url(#gm)"/>
<rect x="729" y="378" width="1" height="453" fill="url(#gM)"/>
<rect x="745" y="378" width="1" height="452" fill="url(#gm)"/>
<rect x="760" y="378" width="1" height="453" fill="url(#gM)"/>
<rect x="775" y="378" width="1" height="452" fill="url(#gm)"/>
<rect x="790" y="378" width="1" height="453" fill="url(#gM)"/>
<rect x="806" y="378" width="1" height="452" fill="url(#gm)"/>
<rect x="821" y="378" width="1" height="453" fill="url(#gM)"/>
<rect x="836" y="378" width="1" height="452" fill="url(#gm)"/>
<rect x="851" y="378" width="1" height="453" fill="url(#gM)"/>
<rect x="867" y="378" width="1" height="452" fill="url(#gm)"/>
<rect x="882" y="378" width="1" height="453" fill="url(#gM)"/>
<rect x="897" y="378" width="1" height="452" fill="url(#gm)"/>
<rect x="912" y="378" width="1" height="453" fill="url(#gM)"/>
<rect x="927" y="378" width="1" height="452" fill="url(#gm)"/>
<rect x="943" y="378" width="1" height="453" fill="url(#gM)"/>
<rect x="958" y="378" width="1" height="452" fill="url(#gm)"/>
<rect x="973" y="378" width="1" height="453" fill="url(#gM)"/>
<rect x="988" y="378" width="1" height="452" fill="url(#gm)"/>
<rect x="1004" y="378" width="1" height="453" fill="url(#gM)"/>
<rect x="1019" y="378" width="1" height="452" fill="url(#gm)"/>
<rect x="1034" y="378" width="1" height="453" fill="url(#gM)"/>
<rect x="1049" y="378" width="1" height="452" fill="url(#gm)"/>
<rect x="1065" y="378" width="1" height="453" fill="url(#gM)"/>
<rect x="1080" y="378" width="1" height="452" fill="url(#gm)"/>
<rect x="1095" y="378" width="1" height="453" fill="url(#gM)"/>
<rect x="1110" y="378" width="1" height="452" fill="url(#gm)"/>
<rect x="1126" y="378" width="1" height="453" fill="url(#gM)"/>
<rect x="147" y="378" width="982" height="1" fill="#606060"/>
<rect x="148" y="406" width="980" height="1" fill="#5b5b5b"/>
<rect x="147" y="434" width="982" height="1" fill="#626262"/>
<rect x="148" y="462" width="980" height="1" fill="#555555"/>
<rect x="147" y="490" width="982" height="1" fill="#646464"/>
<rect x="148" y="518" width="980" height="1" fill="#505050"/>
<rect x="147" y="546" width="982" height="1" fill="#676767"/>
<rect x="148" y="574" width="980" height="1" fill="#4c4c4c"/>
<rect x="147" y="602" width="982" height="1" fill="#696969"/>
<rect x="148" y="630" width="980" height="1" fill="#494949"/>
<rect x="147" y="658" width="982" height="1" fill="#6b6b6b"/>
<rect x="148" y="686" width="980" height="1" fill="#484848"/>
<rect x="147" y="714" width="982" height="1" fill="#6c6c6c"/>
<rect x="148" y="742" width="980" height="1" fill="#474747"/>
<rect x="147" y="770" width="982" height="1" fill="#6e6e6e"/>
<rect x="148" y="798" width="980" height="1" fill="#464646"/>
<polyline points="157.5,403.5 166.5,403.5 173.5,419.5 174.5,425.5 180.5,486.5 181.5,491.5 182.5,478.5 184.5,460.5 186.5,438.5 187.5,424.5 188.5,416.5 192.5,416.5 195.5,417.5 207.5,412.5 211.5,410.5 218.5,413.5 227.5,409.5 234.5,411.5 242.5,408.5 252.5,407.5 255.5,406.5 260.5,406.5 271.5,409.5 278.5,407.5 288.5,402.5 293.5,405.5 302.5,412.5 309.5,405.5 326.5,405.5 331.5,402.5 339.5,402.5 347.5,410.5 355.5,404.5 365.5,404.5 367.5,403.5 378.5,403.5 382.5,400.5 385.5,398.5 388.5,398.5 389.5,399.5 394.5,399.5 399.5,401.5 403.5,401.5 405.5,402.5 410.5,402.5 412.5,401.5 417.5,401.5 423.5,403.5 425.5,402.5 429.5,401.5 435.5,400.5 449.5,400.5 451.5,401.5 454.5,401.5 460.5,403.5 463.5,403.5 465.5,402.5 477.5,402.5 482.5,405.5 487.5,405.5 488.5,406.5 499.5,406.5 504.5,404.5 507.5,404.5 513.5,406.5 521.5,403.5 527.5,406.5 531.5,406.5 533.5,405.5 540.5,405.5 541.5,406.5 547.5,406.5 548.5,407.5 555.5,407.5 556.5,408.5 559.5,408.5 566.5,403.5 574.5,407.5 577.5,407.5 578.5,408.5 592.5,408.5 593.5,407.5 600.5,407.5 601.5,408.5 613.5,408.5 618.5,405.5 620.5,405.5 622.5,406.5 626.5,408.5 635.5,408.5 636.5,407.5 639.5,407.5 640.5,406.5 642.5,406.5 649.5,411.5 653.5,410.5 655.5,409.5 659.5,408.5 664.5,407.5 665.5,407.5 671.5,410.5 680.5,406.5 682.5,406.5 683.5,407.5 685.5,407.5 686.5,408.5 696.5,408.5 697.5,409.5 699.5,409.5 701.5,410.5 703.5,410.5 706.5,408.5 709.5,407.5 713.5,407.5 714.5,406.5 719.5,406.5 720.5,407.5 723.5,407.5 724.5,408.5 729.5,408.5 730.5,407.5 734.5,407.5 735.5,408.5 738.5,408.5 739.5,409.5 743.5,409.5 744.5,408.5 749.5,408.5 750.5,409.5 753.5,409.5 754.5,410.5 756.5,410.5 757.5,409.5 760.5,409.5 761.5,408.5 772.5,408.5 773.5,409.5 776.5,409.5 777.5,410.5 778.5,410.5 780.5,409.5 783.5,407.5 786.5,406.5 789.5,407.5 792.5,409.5 811.5,409.5 812.5,408.5 819.5,408.5 820.5,409.5 826.5,409.5 827.5,408.5 832.5,408.5 837.5,411.5 839.5,411.5 844.5,409.5 846.5,408.5 848.5,409.5 851.5,409.5 852.5,410.5 870.5,410.5 871.5,411.5 874.5,411.5 876.5,412.5 879.5,412.5 880.5,411.5 887.5,411.5 888.5,410.5 895.5,410.5 897.5,411.5 902.5,411.5 903.5,410.5 910.5,410.5 912.5,411.5 922.5,411.5 923.5,410.5 926.5,410.5 928.5,409.5 931.5,409.5 932.5,410.5 935.5,410.5 936.5,411.5 938.5,411.5 940.5,410.5 943.5,409.5 945.5,409.5 948.5,407.5 952.5,406.5 954.5,407.5 958.5,407.5 959.5,408.5 963.5,408.5 964.5,409.5 976.5,409.5 977.5,410.5 980.5,410.5 982.5,411.5 984.5,410.5 987.5,410.5 988.5,409.5 993.5,409.5 994.5,410.5 998.5,410.5 1002.5,408.5 1005.5,407.5 1008.5,408.5 1011.5,410.5 1015.5,410.5 1016.5,409.5 1043.5,409.5 1044.5,408.5 1047.5,408.5 1049.5,407.5 1051.5,407.5 1052.5,408.5 1055.5,408.5 1057.5,409.5 1067.5,409.5 1068.5,410.5 1071.5,410.5 1072.5,411.5 1083.5,411.5 1084.5,410.5 1096.5,410.5 1098.5,409.5 1101.5,408.5 1104.5,408.5 1106.5,409.5 1109.5,409.5 1110.5,410.5 1114.5,410.5 1115.5,411.5 1117.5,411.5" fill="none" stroke="#12b0ea" stroke-width="1"/>
</svg>
<span class="t" style="left:125.94px;top:373px;font-size:12px;">400</span>
<span class="t" style="left:125.94px;top:429px;font-size:12px;">350</span>
<span class="t" style="left:125.94px;top:485px;font-size:12px;">300</span>
<span class="t" style="left:125.94px;top:541px;font-size:12px;">250</span>
<span class="t" style="left:125.94px;top:597px;font-size:12px;">200</span>
<span class="t" style="left:125.94px;top:653px;font-size:12px;">150</span>
<span class="t" style="left:125.94px;top:709px;font-size:12px;">100</span>
<span class="t" style="left:132.61px;top:765px;font-size:12px;">50</span>
<span class="t" style="left:150.62px;top:365px;font-size:12px;">MB/s</span>
<span class="t" style="left:147.01px;top:829px;font-size:12px;">0</span>
<span class="t" style="left:268.01px;top:829px;font-size:12px;">8</span>
<span class="t" style="left:387.43px;top:829px;font-size:12px;">16</span>
<span class="t" style="left:509.50px;top:829px;font-size:12px;">24</span>
<span class="t" style="left:631.70px;top:829px;font-size:12px;">32</span>
<span class="t" style="left:753.72px;top:829px;font-size:12px;">40</span>
<span class="t" style="left:875.75px;top:829px;font-size:12px;">48</span>
<span class="t" style="left:997.65px;top:829px;font-size:12px;">56</span>
<span class="t" style="left:1109.74px;top:829px;font-size:12px;">64MB</span>
</body>
</html>
